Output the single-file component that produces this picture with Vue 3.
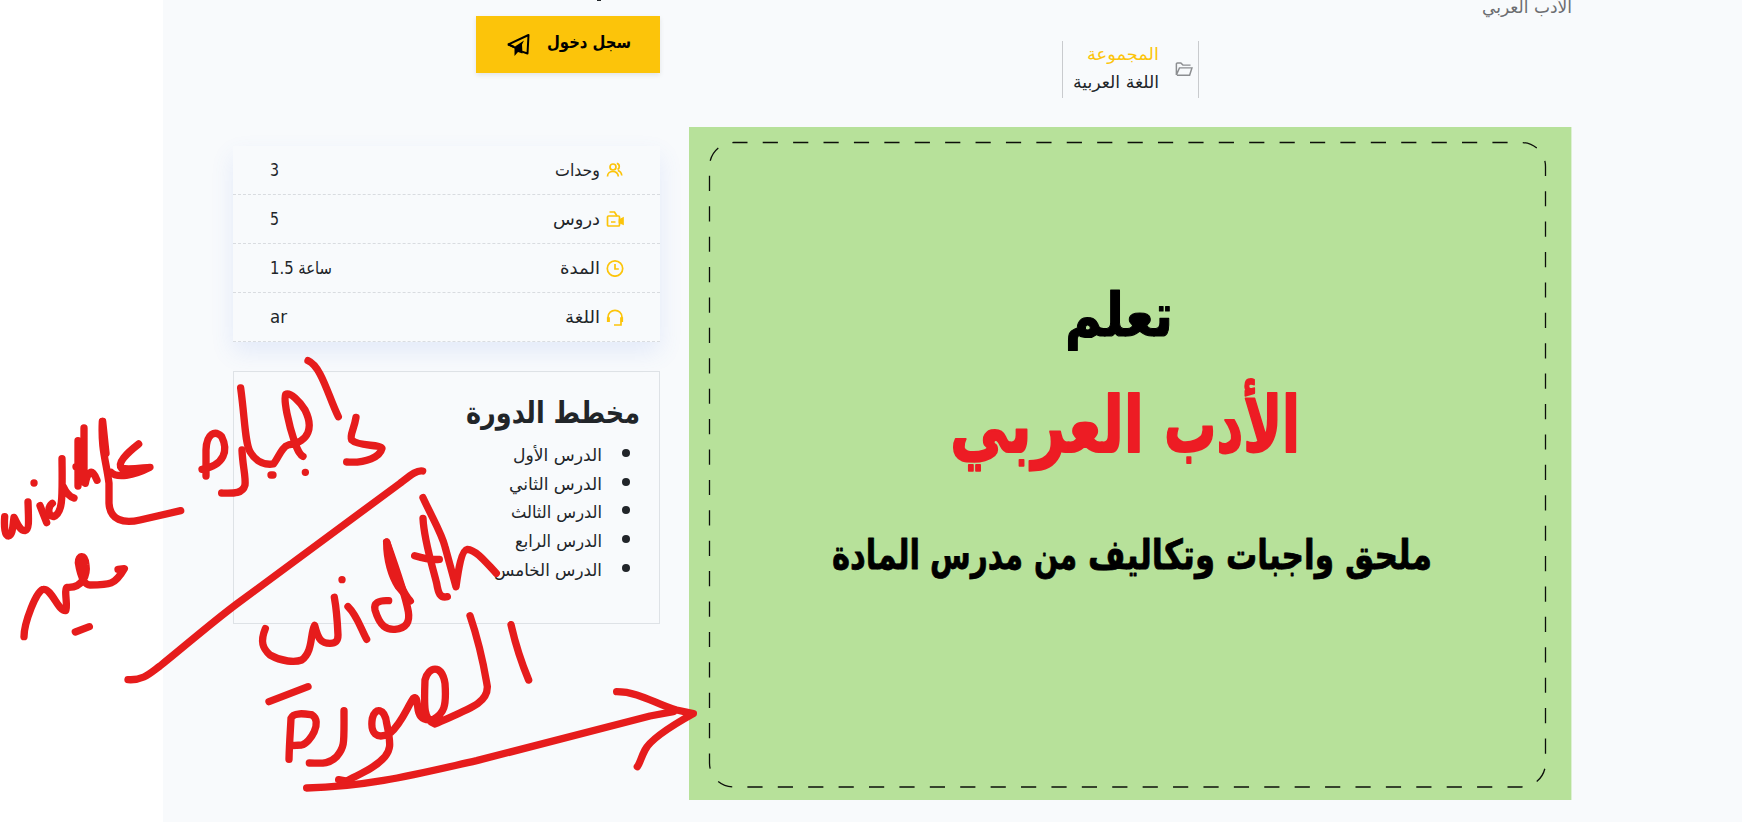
<script setup>
const stats = [
  { label: 'وحدات', width: 45, value: '3', valueWidth: 9, icon: 'users' },
  { label: 'دروس', width: 47, value: '5', valueWidth: 9, icon: 'video' },
  { label: 'المدة', width: 40, value: '1.5 ساعة', valueWidth: 62, icon: 'clock' },
  { label: 'اللغة', width: 35, value: 'ar', valueWidth: 17, icon: 'headset' },
]
const lessons = [
  { title: 'الدرس الأول', width: 89 },
  { title: 'الدرس الثاني', width: 93 },
  { title: 'الدرس الثالث', width: 91 },
  { title: 'الدرس الرابع', width: 87 },
  { title: 'الدرس الخامس', width: 108 },
]
const subject = [
  { word: 'الأدب', x: 1164, width: 136 },
  { word: 'العربي', x: 950, width: 194 },
]
const tagline = [
  { word: 'ملحق', x: 1345, width: 87 },
  { word: 'واجبات', x: 1226, width: 108 },
  { word: 'وتكاليف', x: 1088, width: 127 },
  { word: 'من', x: 1034, width: 43 },
  { word: 'مدرس', x: 930, width: 93 },
  { word: 'المادة', x: 832, width: 88 },
]
</script>

<template>
  <div class="page">
    <div class="surface">
      <aside class="sidebar">
        <div class="price"><i></i></div>
        <button class="login">
          <svg class="plane" width="24" height="24" viewBox="0 0 24 24">
            <path d="M2 11.5 22.5 2 21.5 20.5 16 18.6M2 11.5 8 14" fill="none" stroke="#000" stroke-width="2" stroke-linejoin="round" />
            <path d="M1 11.5 8.5 15.5 8.5 23 12 19 16.5 20.5 16 11.5 18 7.5 9 13.5 4 11Z" />
          </svg>
          <svg class="text strong" width="84" height="32"><text x="0" y="19" textLength="84" lengthAdjust="spacingAndGlyphs">سجل دخول</text></svg>
        </button>

        <section class="stats">
          <div v-for="s in stats" :key="s.label" class="stat">
            <svg class="text" :width="s.valueWidth" height="30"><text x="0" y="21" :textLength="s.valueWidth" lengthAdjust="spacingAndGlyphs">{{ s.value }}</text></svg>
            <div class="stat-label">
              <svg class="text" :width="s.width" height="30"><text x="0" y="21" :textLength="s.width" lengthAdjust="spacingAndGlyphs">{{ s.label }}</text></svg>
              <svg class="icon" width="18" height="18" viewBox="0 0 18 18">
                <g v-if="s.icon === 'users'">
                  <circle cx="7" cy="6" r="3" />
                  <path d="M1.5 15.5C1.5 8.8 12.3 8.8 12.3 15.5M10.8 2.4C14 3 14 7.4 11.5 8.6M11.8 9.5C14 10.2 15.5 12 15.8 14.5" />
                </g>
                <g v-else-if="s.icon === 'video'">
                  <rect x="1.5" y="6" width="12" height="10" rx="1" />
                  <path d="M3.5 2H8.5L11 6M5 12H9.5" />
                  <path class="solid" d="M13.5 10 17 8.2V14L13.5 12.5Z" />
                </g>
                <g v-else-if="s.icon === 'clock'">
                  <circle cx="9" cy="9.5" r="7.7" />
                  <path d="M9 5V10H12.8" />
                </g>
                <g v-else>
                  <path d="M2 13V9.5C2 .1 16 .1 16 9.5V13M15 14V17H8" />
                  <path class="thick" d="M2.4 9.3V14M15.6 9.3V14" />
                </g>
              </svg>
            </div>
          </div>
        </section>

        <section class="outline">
          <svg class="text title" width="174" height="40"><text x="0" y="30" textLength="174" lengthAdjust="spacingAndGlyphs">مخطط الدورة</text></svg>
          <ul>
            <li v-for="l in lessons" :key="l.title">
              <svg class="text" :width="l.width" height="28"><text x="0" y="20" :textLength="l.width" lengthAdjust="spacingAndGlyphs">{{ l.title }}</text></svg>
              <i class="bullet"></i>
            </li>
          </ul>
        </section>
      </aside>

      <main class="main">
        <div class="subtitle">
          <svg class="text muted" width="90" height="26"><text x="0" y="13" textLength="90" lengthAdjust="spacingAndGlyphs">الأدب العربي</text></svg>
        </div>
        <div class="meta">
          <div class="meta-text">
            <svg class="text accent" width="72" height="28"><text x="0" y="18" textLength="72" lengthAdjust="spacingAndGlyphs">المجموعة</text></svg>
            <svg class="text" width="86" height="28"><text x="0" y="18" textLength="86" lengthAdjust="spacingAndGlyphs">اللغة العربية</text></svg>
          </div>
          <svg class="folder" width="18" height="15" viewBox="0 0 17 15" preserveAspectRatio="none">
            <path d="M1.3 13V2Q1.3 1 2.3 1H5.5L7.5 3.1H14.7M1.3 13 4.2 5.9H16L13.8 13.2H1.8" />
          </svg>
        </div>
        <svg class="poster" width="883" height="673" viewBox="689 127 883 673">
          <rect x="689" y="127" width="882.4" height="673" fill="#b7e19a" />
          <rect x="709.5" y="142.5" width="836" height="644.5" rx="24" fill="none" stroke="#0c0f0a" stroke-width="1.3" pathLength="2920.3" stroke-dasharray="15.2 15.22" stroke-dashoffset="1.2" />
          <g class="poster-text">
            <text x="1065" y="336" font-size="60" textLength="108" lengthAdjust="spacingAndGlyphs">تعلم</text>
            <text v-for="w in subject" :key="w.word" class="red" :x="w.x" y="452" font-size="77" :textLength="w.width" lengthAdjust="spacingAndGlyphs">{{ w.word }}</text>
            <text v-for="w in tagline" :key="w.word" class="small" :x="w.x" y="569" font-size="41" :textLength="w.width" lengthAdjust="spacingAndGlyphs">{{ w.word }}</text>
          </g>
        </svg>
      </main>
    </div>

    <svg class="ink" width="1742" height="822" viewBox="0 0 1742 822">
      <g transform="translate(0 340) scale(.33333)">
        <path d="M14 530C12 560 14 588 26 588C38 586 38 560 42 532C50 545 58 572 75 572C88 570 86 540 84 486" />
        <path d="M120 497 140 548M102 429h.1" />
        <path d="M157 490C143 500 142 528 160 530C190 520 187 470 186 356M190 440C200 462 210 470 222 474" />
        <path d="M234 302V438M252 264V425M243 310V425M228 380H240M256 430C262 400 275 378 291 421" />
        <path d="M307 244C303 330 318 360 327 430V490C330 540 370 552 420 540L542 512" />
        <path d="M308 244 318 340" />
        <path d="M416 312C380 340 350 370 365 385C390 390 430 383 450 382C400 408 350 415 333 397" />
        <path d="M72 890C72 850 110 748 130 748C155 745 175 815 197 812C205 800 190 745 202 742C250 745 262 700 258 675C255 640 235 645 235 668C240 700 250 735 270 735C330 735 345 735 373 686L354 688M226 876 268 860" />
        <path d="M618 408V330C620 280 645 270 665 290C685 330 675 375 606 388" />
        <path d="M726 330C728 380 738 410 735 435C728 462 700 460 665 459" />
        <path d="M722 144C735 240 735 310 750 335C770 370 800 375 820 372C835 355 845 320 865 315C930 305 940 260 915 210C900 185 870 155 857 163C850 180 865 250 885 310C895 335 900 345 909 349M813 405h6M916 397h.1" />
        <path d="M924 62C965 80 985 170 1015 230M1068 232C1062 270 1048 285 1055 300C1075 320 1140 312 1146 325C1140 350 1100 370 1040 366" />
        <path d="M384 1019C430 1022 450 1000 480 978C550 922 630 852 710 792L1200 430C1235 403 1250 390 1268 393" />
      </g>
      <g transform="translate(220 460) scale(.33333)">
        <path d="M136 506C120 545 128 565 150 585C185 605 225 608 245 600C280 575 270 520 284 496C295 540 305 550 330 550C345 550 354 545 354 525C352 480 350 450 343 412M366 359h.1" />
        <path d="M384 440C410 465 420 500 440 538" />
        <path d="M506 422C475 420 460 430 465 450C480 500 500 510 525 508C560 505 570 485 565 455C555 400 530 330 500 246" />
        <path class="filled" d="M500 246C500 300 515 350 535 380L571 423C550 400 540 380 500 246Z" />
        <path d="M609 175C612 240 635 310 650 370C655 400 660 415 682 410M584 287C610 295 640 300 658 298" />
        <path d="M609 113C640 180 665 220 675 260L708 380C715 330 725 270 742 268C770 270 800 310 829 340" />
        <path d="M873 494C888 560 905 610 926 660" />
        <path d="M750 467C785 570 795 640 802 680C803 730 750 745 645 792C610 780 612 740 615 660C625 620 665 610 675 670C680 740 672 760 640 778C600 785 595 760 593 740C590 715 588 710 580 715C560 745 545 790 510 820C470 840 450 820 457 775C465 740 495 745 500 790C515 860 510 870 495 890C460 930 410 945 380 963L356 959" />
        <path d="M372 752C372 850 375 860 350 890C325 915 300 909 268 909" />
        <path d="M207 898C208 850 212 800 213 775C220 755 260 762 275 764C310 785 270 850 245 855L215 857M147 725 264 680" />
        <path d="M260 984C450 980 600 940 770 902L1290 768 1360 755" />
        <path d="M1190 695C1260 695 1310 735 1370 750L1420 761C1350 800 1290 840 1275 870C1262 895 1260 910 1252 920" />
      </g>
    </svg>
  </div>
</template>

<style>
body {
  overflow: hidden;
}
</style>

<style scoped>
.page {
  position: relative;
  box-sizing: border-box;
  width: 1742px;
  height: 822px;
  padding-left: 163px;
  overflow: hidden;
  background: #fff;
}
.surface {
  box-sizing: border-box;
  height: 822px;
  padding-left: 70px;
  display: grid;
  grid-template-columns: 427px 883px;
  column-gap: 29px;
  background: #f8fafc;
}
.text {
  display: block;
  overflow: visible;
  flex: none;
  fill: #212529;
  font: 17px 'DejaVu Sans Condensed', 'DejaVu Sans', sans-serif;
}
.strong {
  fill: #000;
  font-weight: bold;
}
.muted {
  fill: #6c6d70;
}
.accent {
  fill: #fcc40a;
}
.price {
  height: 16px;
  padding-left: 364px;
}
.price i {
  display: block;
  width: 4px;
  height: 1px;
  background: #212529;
}
.login {
  display: flex;
  align-items: center;
  gap: 17px;
  box-sizing: border-box;
  width: 184px;
  height: 57px;
  margin-left: 243px;
  padding: 0 28px 0 30px;
  border: 0;
  background: #fcc40a;
  box-shadow: 0 2px 5px rgba(0, 0, 0, 0.09);
}
.plane {
  flex: none;
}
.stats {
  margin-top: 73px;
  background: #f8fafc;
  box-shadow: 0 10px 22px rgba(80, 120, 230, 0.12);
}
.stat {
  display: flex;
  align-items: center;
  justify-content: space-between;
  box-sizing: border-box;
  height: 49px;
  padding: 0 36px 0 37px;
  border-bottom: 1px dashed #d9dce0;
}
.stat-label {
  display: flex;
  align-items: center;
  gap: 6px;
}
.icon {
  fill: none;
  stroke: #fcc40a;
  stroke-width: 1.7;
}
.icon .solid {
  fill: #fcc40a;
}
.icon .thick {
  stroke-width: 3;
}
.outline {
  box-sizing: border-box;
  height: 253px;
  margin-top: 29px;
  padding: 21px 19px 0;
  border: 1px solid #dee2e6;
}
.title {
  margin-left: auto;
  font-size: 30px;
  font-weight: bold;
}
.outline ul {
  margin: 0;
  padding: 8px 10px 0 0;
  list-style: none;
}
.outline li {
  display: flex;
  align-items: center;
  justify-content: flex-end;
  gap: 20px;
  height: 28.6px;
}
.bullet {
  width: 8px;
  height: 8px;
  margin-top: -4px;
  border-radius: 50%;
  background: #212529;
}
.subtitle {
  display: flex;
  justify-content: flex-end;
  height: 41px;
}
.meta {
  display: flex;
  align-items: center;
  gap: 16px;
  box-sizing: border-box;
  width: 137px;
  height: 57px;
  margin-left: 373px;
  padding: 0 5px 0 10px;
  border: solid #c9cbce;
  border-width: 0 1px;
}
.meta-text {
  display: flex;
  flex-direction: column;
  align-items: flex-end;
  width: 86px;
}
.folder {
  flex: none;
  fill: none;
  stroke: #8c8e91;
  stroke-width: 1.4;
}
.poster {
  display: block;
  margin-top: 29px;
}
.poster-text {
  font-family: 'DejaVu Sans', sans-serif;
  font-weight: bold;
  stroke: #000;
  stroke-width: 1.2;
  stroke-linejoin: round;
}
.red {
  fill: #ed1c24;
  stroke: #ed1c24;
  stroke-width: 2;
}
.small {
  stroke-width: 0.8;
}
.ink {
  position: absolute;
  inset: 0;
  fill: none;
  stroke: #e61c1c;
  stroke-width: 22;
  stroke-linecap: round;
  stroke-linejoin: round;
  pointer-events: none;
}
.ink .filled {
  fill: #e61c1c;
}
</style>
